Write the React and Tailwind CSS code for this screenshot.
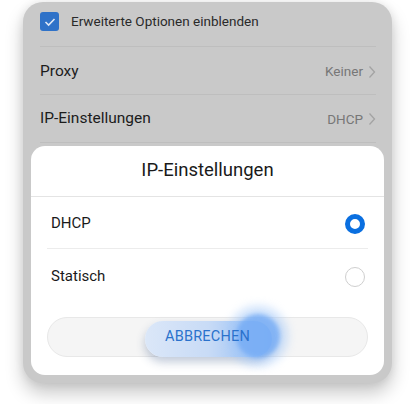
import React from 'react';

const font = { fontFamily: 'Roboto, "Noto Sans", sans-serif' };

const Chevron = () => (
    <svg width="8" height="14" viewBox="0 0 8 14" className="ml-[5px]">
        <path d="M1.5 1.5 L6.5 7 L1.5 12.5" fill="none" stroke="#a3a3a3" strokeWidth="1.3" />
    </svg>
);

const App = () => {
    return (
        <div className="w-[418px] h-[404px] bg-white pl-[23px] pt-[2px]" style={font}>
            <div className="w-[369px] h-[381px] rounded-[20px] bg-[#c9c9c9] shadow-[0_10px_18px_rgba(0,0,0,0.22),0_0_10px_rgba(0,0,0,0.08)] flex flex-col px-2 pb-2">
                {/* Settings behind the dialog */}
                <div className="pl-[9px] pr-[8px]">
                    <div className="h-[45px] flex items-center pb-[5px] border-b border-[#bebebe]">
                        <div className="w-[19px] h-[19px] rounded-[3px] bg-[#2f72c8] flex items-center justify-center">
                            <svg width="12" height="10" viewBox="0 0 12 10">
                                <path d="M1.5 5 L4.6 8 L10.5 2" fill="none" stroke="#dfe8f5" strokeWidth="1.6" />
                            </svg>
                        </div>
                        <span className="ml-[12px] text-[13.5px] text-[#2a2a2a]">Erweiterte Optionen einblenden</span>
                    </div>
                    <div className="h-[48px] flex items-center justify-between pt-[2px] border-b border-[#bebebe]">
                        <span className="text-[15.5px] text-[#1c1c1c]">Proxy</span>
                        <span className="flex items-center text-[13.5px] text-[#777]">Keiner<Chevron /></span>
                    </div>
                    <div className="h-[48px] flex items-center justify-between pt-[1px] border-b border-[#bebebe]">
                        <span className="text-[15.5px] text-[#1c1c1c]">IP-Einstellungen</span>
                        <span className="flex items-center text-[13.5px] text-[#777]">DHCP<Chevron /></span>
                    </div>
                </div>

                {/* Dialog */}
                <div className="mt-[3px] flex-1 bg-white rounded-[14px] flex flex-col">
                    <div className="h-[51px] flex items-center justify-center border-b border-[#e4e4e4] text-[18.5px] text-[#1a1a1a]">
                        IP-Einstellungen
                    </div>
                    <div className="px-4">
                        <div className="h-[52px] flex items-center justify-between pt-[2px] pl-[4px] pr-[3px] border-b border-[#ececec]">
                            <span className="text-[15px] text-[#1a1a1a]">DHCP</span>
                            <span className="w-[20px] h-[20px] rounded-full border-[5px] border-[#0a6fe0]" />
                        </div>
                        <div className="h-[52px] flex items-center justify-between pt-[3px] pl-[4px] pr-[3px]">
                            <span className="text-[15px] text-[#1a1a1a]">Statisch</span>
                            <span className="w-[20px] h-[20px] rounded-full border border-[#cfcfcf]" />
                        </div>
                        <div className="mt-[16px] relative h-[40px] rounded-full bg-[#f5f5f5] border border-[#e8e8e8] flex items-center justify-center">
                            <div className="absolute left-[97px] top-[3px] w-[127px] h-[36px] rounded-full bg-gradient-to-r from-[#dbe7f8] via-[#c8dbf6] to-[#8cb9f4] blur-[0.6px] shadow-[0_5px_10px_rgba(50,80,130,0.3)]" />
                            <div className="absolute left-[180px] top-[-12px] w-[60px] h-[60px] rounded-full bg-[#9cc4f8] opacity-50 blur-[5px]" />
                            <div className="absolute left-[188px] top-[-4px] w-[44px] h-[44px] rounded-full bg-[#74abf5] opacity-80 blur-[2px]" />
                            <span className="relative text-[14.5px] text-[#2a72cc] tracking-[0.2px]">ABBRECHEN</span>
                        </div>
                    </div>
                </div>
            </div>
        </div>
    );
};

export default App;
